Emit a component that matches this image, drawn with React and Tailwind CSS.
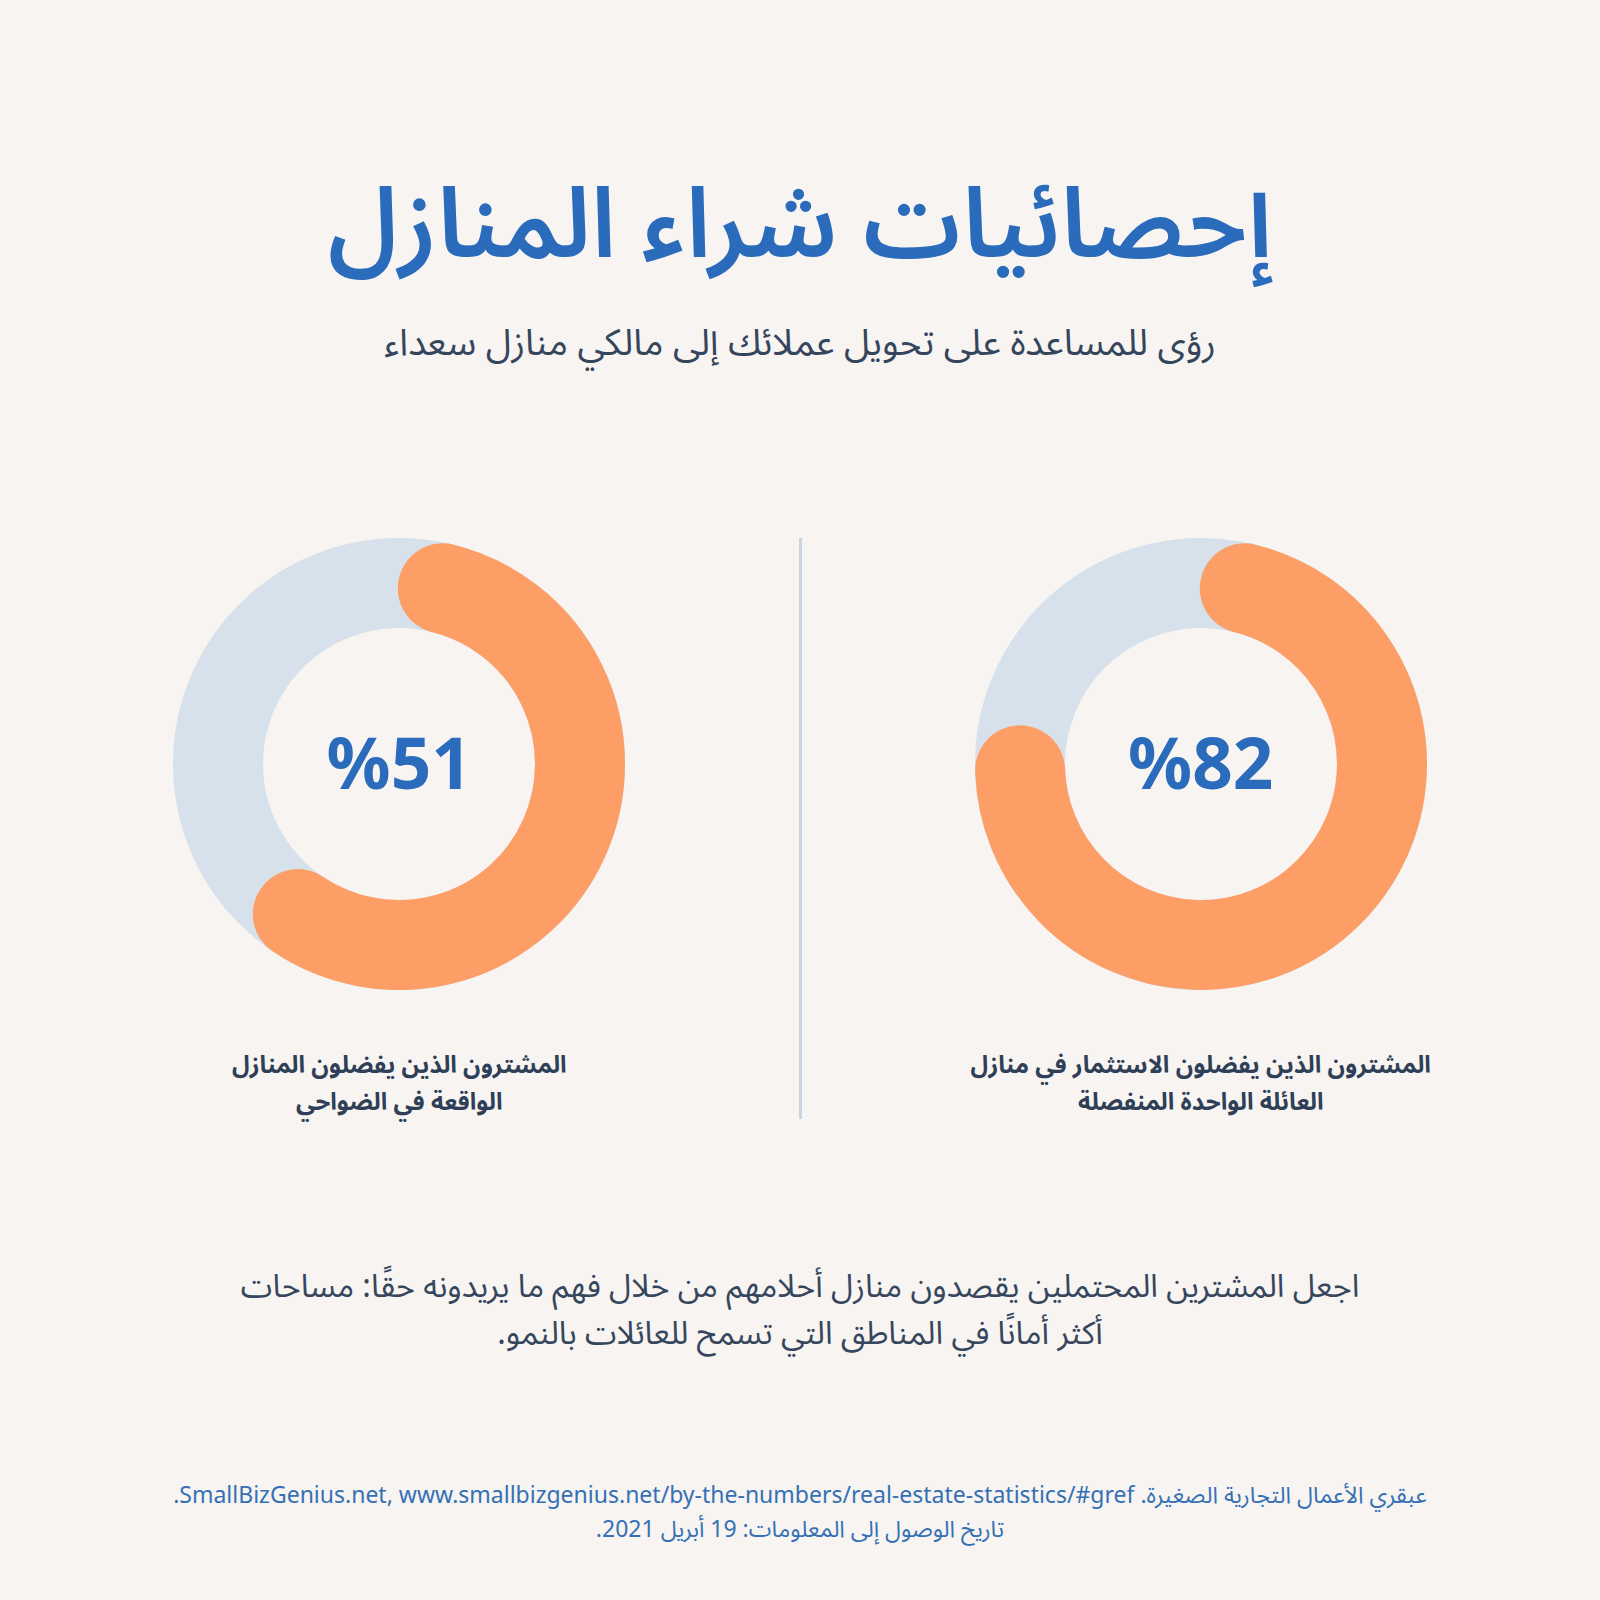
const font = { fontFamily: '"Noto Sans", "Noto Sans Arabic", "DejaVu Sans", sans-serif' };

const point = (deg, r) => {
  const a = (deg * Math.PI) / 180;
  return [230 + r * Math.sin(a), 230 - r * Math.cos(a)];
};

const arcPath = (from, to, r) => {
  const [x1, y1] = point(from, r);
  const [x2, y2] = point(to, r);
  const large = to - from > 180 ? 1 : 0;
  return `M ${x1} ${y1} A ${r} ${r} 0 ${large} 1 ${x2} ${y2}`;
};

const Donut = ({ value, end, label }) => (
  <div className="flex-1 flex flex-col items-center">
    <div className="grid place-items-center">
      <svg width="452" height="452" viewBox="4 4 452 452" className="col-start-1 row-start-1">
        <circle cx="230" cy="230" r="181" fill="none" stroke="#d6e1ec" strokeWidth="90" />
        <path d={arcPath(14, end, 181)} fill="none" stroke="#fe9e67" strokeWidth="90" strokeLinecap="round" />
      </svg>
      <span
        dir="ltr"
        className="col-start-1 row-start-1 pb-[6px] text-[71px] font-bold leading-none text-[#2a6bbb]"
      >
        %{value}
      </span>
    </div>
    <p className="mt-[55px] text-center text-[24px] font-bold leading-[37px] text-[#2e3f57]">
      {label[0]}
      <br />
      {label[1]}
    </p>
  </div>
);

export default function App() {
  return (
    <div dir="rtl" style={font} className="w-full h-[1600px] bg-[#f7f4f1] flex flex-col items-center pt-[160px]">
      <h1 className="text-[98px] font-semibold leading-[118px] text-[#2a6bbb]">إحصائيات شراء المنازل</h1>
      <p className="mt-[38px] text-[37px] leading-[50px] text-[#34455c]">
        رؤى للمساعدة على تحويل عملائك إلى مالكي منازل سعداء
      </p>

      <div className="mt-[172px] w-full flex">
        <Donut
          value="82"
          end={268}
          label={["المشترون الذين يفضلون الاستثمار في منازل", "العائلة الواحدة المنفصلة"]}
        />
        <div className="w-[3px] bg-[#c9d4e1] self-stretch" />
        <Donut
          value="51"
          end={214}
          label={["المشترون الذين يفضلون المنازل", "الواقعة في الضواحي"]}
        />
      </div>

      <p className="mt-[142px] text-center text-[32px] leading-[47px] text-[#35465d]">
        اجعل المشترين المحتملين يقصدون منازل أحلامهم من خلال فهم ما يريدونه حقًا: مساحات
        <br />
        أكثر أمانًا في المناطق التي تسمح للعائلات بالنمو.
      </p>

      <p className="mt-[122px] text-center text-[23px] leading-[34px] text-[#3570b5]">
        عبقري الأعمال التجارية الصغيرة. SmallBizGenius.net, www.smallbizgenius.net/by-the-numbers/real-estate-statistics/#gref.
        <br />
        تاريخ الوصول إلى المعلومات: 19 أبريل 2021.
      </p>
    </div>
  );
}
